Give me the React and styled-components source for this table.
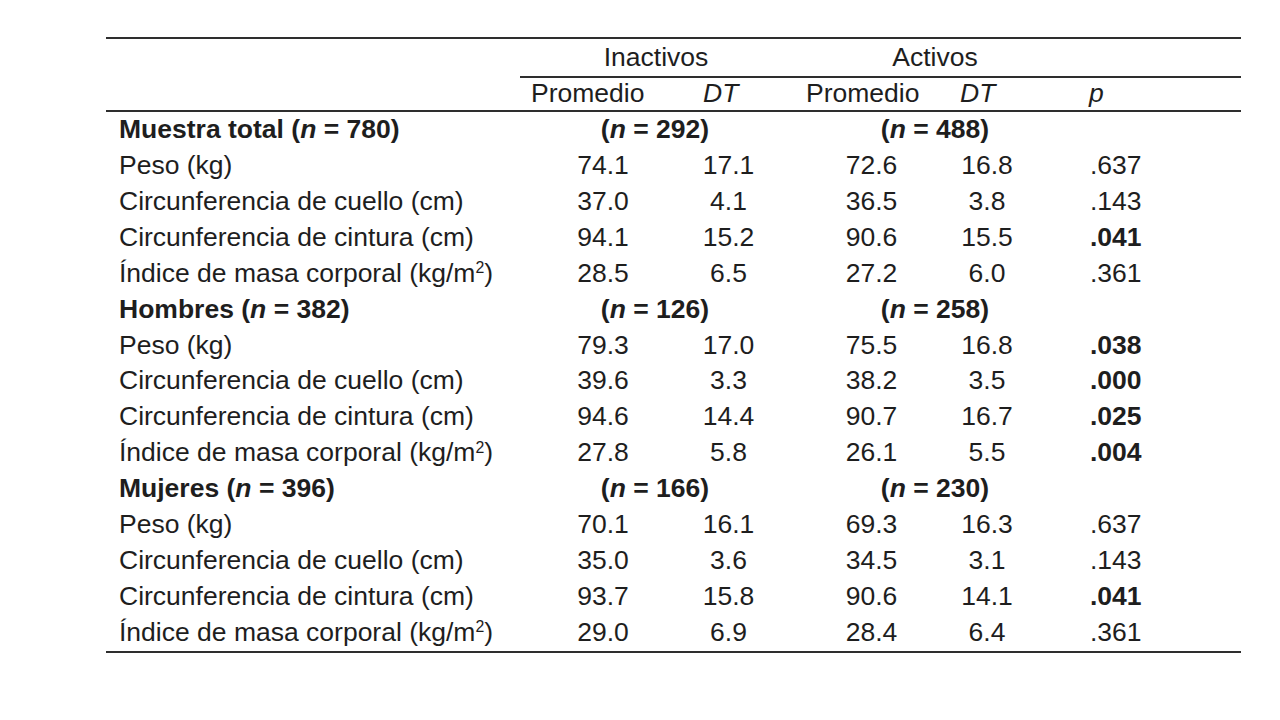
import React from "react";
import styled, { createGlobalStyle } from "styled-components";

const Global = createGlobalStyle`
  html, body { margin: 0; padding: 0; background: #ffffff; }
  body { font-family: "Liberation Sans", Arial, sans-serif; color: #1e1e1e; }
`;

const LINE = "#2e2e2e";

const Table = styled.div`
  margin: 37px 0 0 106px;
  width: 1135px;
  border-top: 2px solid ${LINE};
  border-bottom: 2px solid ${LINE};
  font-size: 26.5px;
`;

const GroupRow = styled.div`
  display: grid;
  grid-template-columns: 414px 1fr;
  height: 37px;
  line-height: 37px;
`;

const GroupBar = styled.div`
  display: grid;
  grid-template-columns: 272px 286px 1fr;
  border-bottom: 2px solid ${LINE};
`;

const GroupHead = styled.div`
  text-align: center;
  white-space: nowrap;
`;

const SubHeadRow = styled.div`
  display: grid;
  grid-template-columns: 413px 172px 103px 154px 129px 1fr;
  height: 34px;
  line-height: 35px;
  border-bottom: 2px solid ${LINE};
`;

const SubHead = styled.div`
  padding-left: 12px;
  white-space: nowrap;
  font-style: ${(p) => (p.$italic ? "italic" : "normal")};
`;

const BodyRow = styled.div`
  display: grid;
  grid-template-columns: 414px 166px 85px 201px 30px 1fr;
  height: 35.93px;
  line-height: 35.6px;
`;

const Label = styled.div`
  padding-left: 13px;
  white-space: nowrap;
  font-weight: ${(p) => (p.$bold ? 700 : 400)};
`;

const Value = styled.div`
  display: flex;
  justify-content: center;
  white-space: nowrap;
`;

const PValue = styled.div`
  padding-left: 88px;
  white-space: nowrap;
  font-weight: ${(p) => (p.$bold ? 700 : 400)};
`;

const Span = styled.div`
  grid-column: span 2;
  display: flex;
  justify-content: center;
  padding-left: ${(p) => p.$shift}px;
  font-weight: 700;
  white-space: nowrap;
`;

const N = styled.i`
  font-style: italic;
`;

const Sup = styled.span`
  font-size: 0.6em;
  position: relative;
  top: -0.55em;
  line-height: 0;
`;

const imc = (
  <>
    Índice de masa corporal (kg/m<Sup>2</Sup>)
  </>
);

const groups = [
  {
    title: "Muestra total",
    n: "780",
    ni: "292",
    na: "488",
    rows: [
      ["Peso (kg)", "74.1", "17.1", "72.6", "16.8", ".637", false],
      ["Circunferencia de cuello (cm)", "37.0", "4.1", "36.5", "3.8", ".143", false],
      ["Circunferencia de cintura (cm)", "94.1", "15.2", "90.6", "15.5", ".041", true],
      [imc, "28.5", "6.5", "27.2", "6.0", ".361", false],
    ],
  },
  {
    title: "Hombres",
    n: "382",
    ni: "126",
    na: "258",
    rows: [
      ["Peso (kg)", "79.3", "17.0", "75.5", "16.8", ".038", true],
      ["Circunferencia de cuello (cm)", "39.6", "3.3", "38.2", "3.5", ".000", true],
      ["Circunferencia de cintura (cm)", "94.6", "14.4", "90.7", "16.7", ".025", true],
      [imc, "27.8", "5.8", "26.1", "5.5", ".004", true],
    ],
  },
  {
    title: "Mujeres",
    n: "396",
    ni: "166",
    na: "230",
    rows: [
      ["Peso (kg)", "70.1", "16.1", "69.3", "16.3", ".637", false],
      ["Circunferencia de cuello (cm)", "35.0", "3.6", "34.5", "3.1", ".143", false],
      ["Circunferencia de cintura (cm)", "93.7", "15.8", "90.6", "14.1", ".041", true],
      [imc, "29.0", "6.9", "28.4", "6.4", ".361", false],
    ],
  },
];

const NCount = ({ v }) => (
  <span>
    (<N>n</N> = {v})
  </span>
);

export default function App() {
  return (
    <>
      <Global />
      <Table>
        <GroupRow>
          <div />
          <GroupBar>
            <GroupHead>Inactivos</GroupHead>
            <GroupHead>Activos</GroupHead>
            <div />
          </GroupBar>
        </GroupRow>
        <SubHeadRow>
          <div />
          <SubHead>Promedio</SubHead>
          <SubHead $italic>DT</SubHead>
          <SubHead>Promedio</SubHead>
          <SubHead $italic>DT</SubHead>
          <SubHead $italic>p</SubHead>
        </SubHeadRow>
        {groups.map((g) => (
          <React.Fragment key={g.title}>
            <BodyRow>
              <Label $bold>
                {g.title} <NCount v={g.n} />
              </Label>
              <Span $shift={19}>
                <NCount v={g.ni} />
              </Span>
              <Span $shift={97}>
                <NCount v={g.na} />
              </Span>
              <div />
            </BodyRow>
            {g.rows.map((r, i) => (
              <BodyRow key={i}>
                <Label>{r[0]}</Label>
                <Value>{r[1]}</Value>
                <Value>{r[2]}</Value>
                <Value>{r[3]}</Value>
                <Value>{r[4]}</Value>
                <PValue $bold={r[6]}>{r[5]}</PValue>
              </BodyRow>
            ))}
          </React.Fragment>
        ))}
      </Table>
    </>
  );
}
